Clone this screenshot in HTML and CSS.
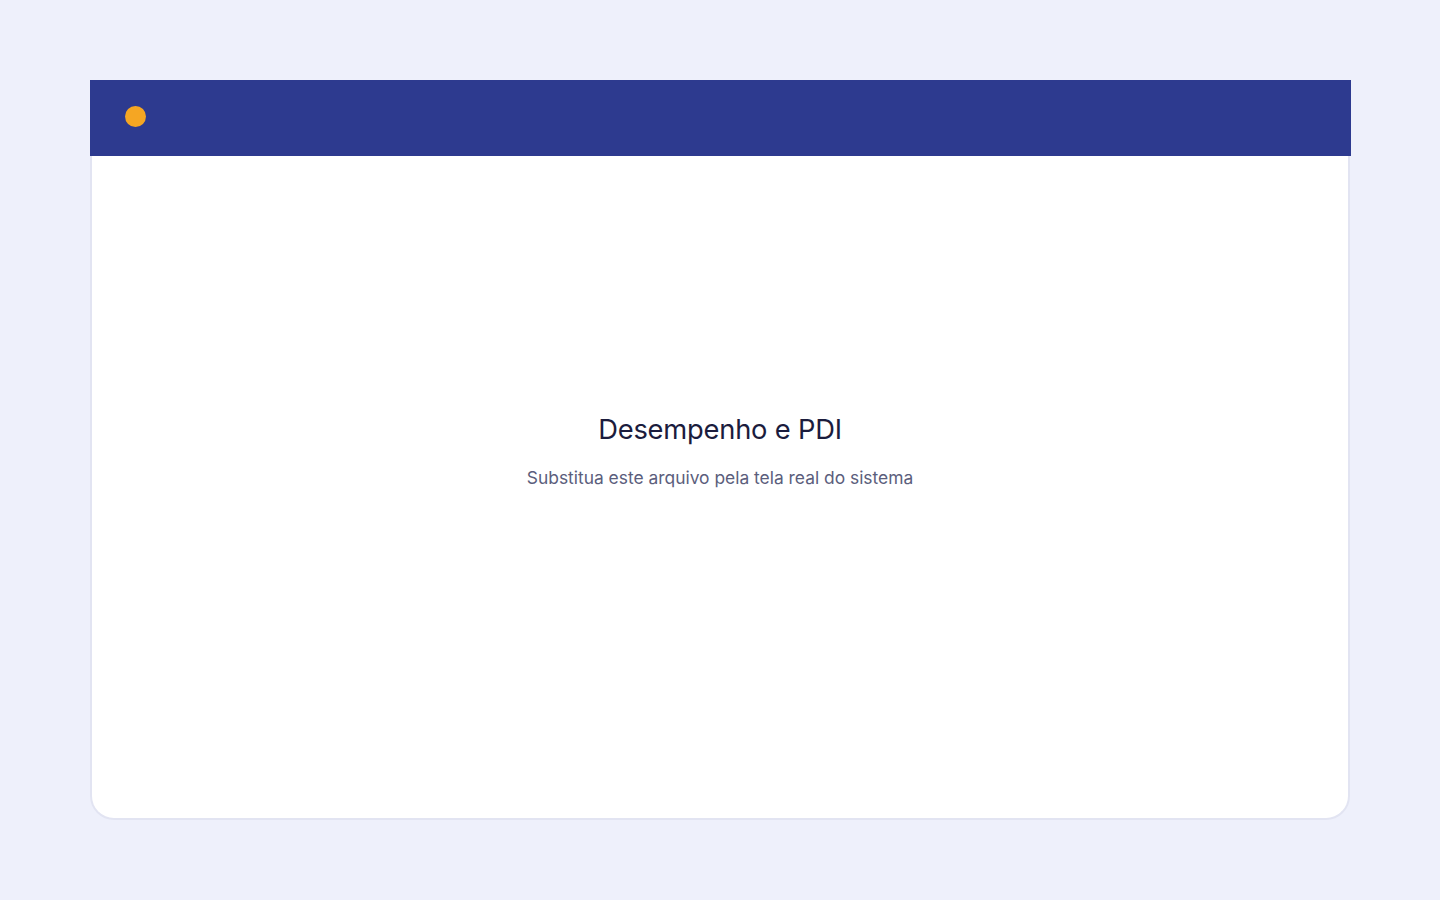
FILE: index.html
```html
<!DOCTYPE html>
<html lang="pt">
<head>
<meta charset="utf-8">
<title>Desempenho e PDI</title>
<link rel="stylesheet" href="styles.css">
</head>
<body>
<div class="page">
  <div class="card">
    <div class="bar"><span class="dot"></span></div>
    <div class="content">
      <h1 class="title">Desempenho e PDI</h1>
      <p class="subtitle">Substitua este arquivo pela tela real do sistema</p>
    </div>
  </div>
</div>
</body>
</html>
```
FILE: styles.css
```css
html, body {
  margin: 0;
  padding: 0;
  background: #eef0fb;
  font-family: Inter, "Noto Sans", sans-serif;
}
.page {
  padding: 80px 90px;
  height: 900px;
  box-sizing: border-box;
}
.card {
  width: 1260px;
  height: 740px;
  box-sizing: border-box;
  background: #ffffff;
  border: 2px solid #e2e4f2;
  border-top: none;
  border-radius: 0 0 24px 24px;
  display: flex;
  flex-direction: column;
}
.bar {
  height: 76px;
  box-sizing: border-box;
  margin: 0 -3px 0 -2px;
  background: #2d3a8f;
  display: flex;
  align-items: center;
  padding: 0 0 4px 35px;
  flex-shrink: 0;
}
.dot {
  width: 21px;
  height: 21px;
  border-radius: 50%;
  background: #f5a623;
}
.content {
  flex: 1;
  display: flex;
  flex-direction: column;
  align-items: center;
  justify-content: center;
  padding-bottom: 72px;
}
.title {
  margin: 0;
  font-size: 27.3px;
  font-weight: 400;
  color: #1b1c3d;
  letter-spacing: -0.2px;
  line-height: 32px;
}
.subtitle {
  margin: 21px 0 0;
  font-size: 17.4px;
  line-height: 22px;
  color: #5b5e7c;
}
```
